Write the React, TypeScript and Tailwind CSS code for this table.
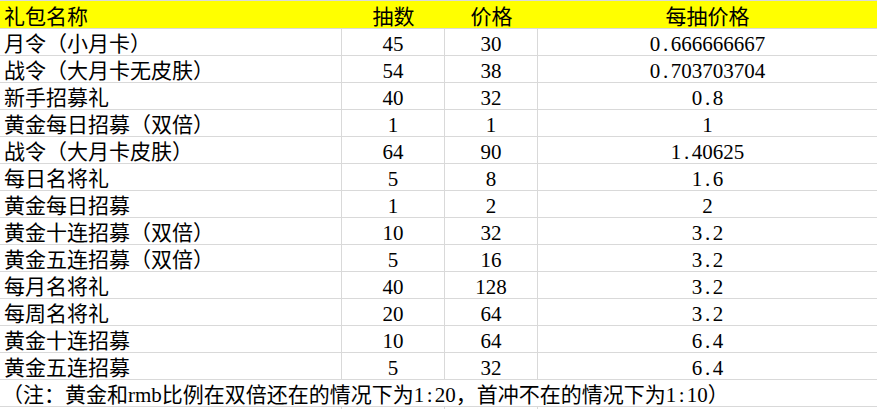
import React from "react";

const rows: [string, string, string, string][] = [
  ["月令（小月卡）", "45", "30", "0.666666667"],
  ["战令（大月卡无皮肤）", "54", "38", "0.703703704"],
  ["新手招募礼", "40", "32", "0.8"],
  ["黄金每日招募（双倍）", "1", "1", "1"],
  ["战令（大月卡皮肤）", "64", "90", "1.40625"],
  ["每日名将礼", "5", "8", "1.6"],
  ["黄金每日招募", "1", "2", "2"],
  ["黄金十连招募（双倍）", "10", "32", "3.2"],
  ["黄金五连招募（双倍）", "5", "16", "3.2"],
  ["每月名将礼", "40", "128", "3.2"],
  ["每周名将礼", "20", "64", "3.2"],
  ["黄金十连招募", "10", "64", "6.4"],
  ["黄金五连招募", "5", "32", "6.4"],
];

function T({ s }: { s: string }) {
  const out: React.ReactNode[] = [];
  let buf = "";
  const flush = (k: number) => {
    if (buf) {
      out.push(
        <span key={"c" + k} className="inline-block h-[24px] leading-[24px] overflow-visible">
          {buf}
        </span>
      );
      buf = "";
    }
  };
  Array.from(s).forEach((ch, i) => {
    if (/[0-9.:]/.test(ch)) {
      flush(i);
      out.push(
        <span
          key={i}
          className="inline-block w-[10.5px] text-center leading-none [font-family:'Liberation_Serif',serif]"
        >
          {ch}
        </span>
      );
    } else if (ch.charCodeAt(0) < 128) {
      flush(i);
      out.push(
        <span key={i} className="inline-block leading-none [font-family:'Liberation_Serif',serif]">
          {ch}
        </span>
      );
    } else {
      buf += ch;
    }
  });
  flush(s.length + 1);
  return <>{out}</>;
}

export default function App() {
  const cell = "h-[26px] leading-[26px] whitespace-nowrap border-r border-[#d9d9d9]";
  return (
    <div className="w-[877px] h-[409px] overflow-hidden bg-white text-black text-[21px] [font-family:'Noto_Sans_CJK_SC',sans-serif] border-t border-[#d9d9d9]">
      <div className="grid grid-cols-[342px_103px_93px_1fr] h-[28px] bg-[#ffff00] border-b border-[#d9d9d9] leading-[26px] pt-[1px]">
        <div className="pl-[4px] h-[26px]">
          <T s="礼包名称" />
        </div>
        <div className="text-center h-[26px]">
          <T s="抽数" />
        </div>
        <div className="text-center h-[26px]">
          <T s="价格" />
        </div>
        <div className="text-center h-[26px]">
          <T s="每抽价格" />
        </div>
      </div>
      {rows.map((r, i) => (
        <div key={i} className="grid grid-cols-[342px_103px_93px_1fr] h-[27px] border-b border-[#d9d9d9]">
          <div className={cell + " pl-[4px]"}>
            <T s={r[0]} />
          </div>
          <div className={cell + " text-center"}>
            <T s={r[1]} />
          </div>
          <div className={cell + " text-center"}>
            <T s={r[2]} />
          </div>
          <div className="h-[26px] leading-[26px] text-center whitespace-nowrap">
            <T s={r[3]} />
          </div>
        </div>
      ))}
      <div className="h-[27px] border-b border-[#d9d9d9]">
        <div className="h-[26px] leading-[26px] whitespace-nowrap pl-[2px]">
          <T s="（注：黄金和rmb比例在双倍还在的情况下为1:20，首冲不在的情况下为1:10）" />
        </div>
      </div>
      <div className="grid grid-cols-[342px_103px_93px_1fr] h-[27px]">
        <div className={cell}></div>
        <div className={cell}></div>
        <div className={cell}></div>
        <div></div>
      </div>
    </div>
  );
}
